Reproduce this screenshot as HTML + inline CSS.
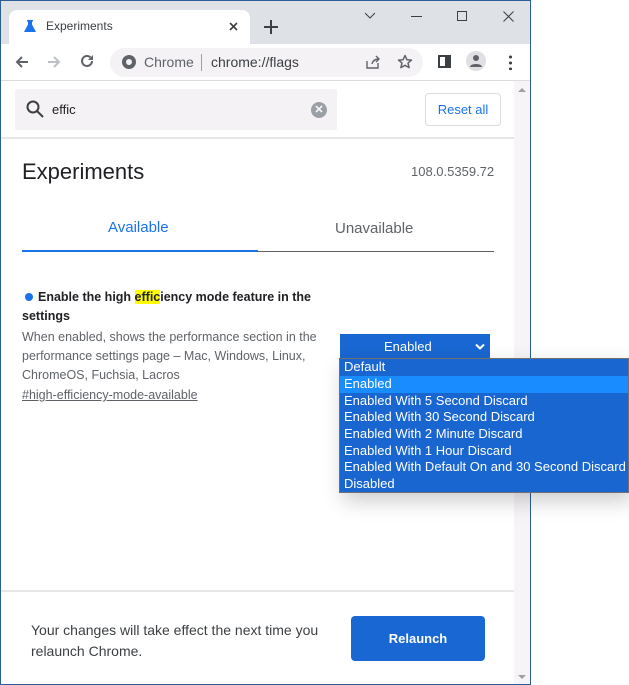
<!DOCTYPE html>
<html><head><meta charset="utf-8"><style>
*{margin:0;padding:0;box-sizing:border-box}
body{width:629px;height:685px;background:#fff;position:relative;overflow:hidden;font-family:"Liberation Sans",Arial,sans-serif}
.a{position:absolute}
.win{left:0;top:0;width:531px;height:685px;border:1px solid #2b5f93;background:#fff;overflow:hidden}
.opt{position:absolute;left:0;width:100%;height:16.7px;padding-left:4px;font-size:13px;color:#fff;line-height:16px;white-space:nowrap}
</style></head><body>
<div class="a win">
 <div class="a" style="left:0;top:0;width:530px;height:43px;background:#dee1e6"></div>
 <div class="a" style="left:8px;top:9px;width:241px;height:35px;background:#fff;border-radius:8px 8px 0 0"></div>
 <svg class="a" style="left:22px;top:18px" width="14" height="14" viewBox="0 0 14 14"><path d="M4 1h6v1.5H9v3l4 7.5H1l4-7.5v-3H4z" fill="#1a73e8"/></svg>
 <div class="a" style="left:45px;top:18px;font-size:12px;color:#3c4043">Experiments</div>
 <svg class="a" style="left:228px;top:21px" width="9" height="9"><path d="M1 1l7 7M8 1L1 8" stroke="#3c4043" stroke-width="1.6"/></svg>
 <svg class="a" style="left:263px;top:19px" width="14" height="14"><path d="M7 0v14M0 7h14" stroke="#3c4043" stroke-width="2"/></svg>
 <svg class="a" style="left:363px;top:11px" width="12" height="7"><path d="M1 1l5 5 5-5" stroke="#3c4043" fill="none"/></svg>
 <div class="a" style="left:410px;top:15px;width:11px;height:1px;background:#3c4043"></div>
 <div class="a" style="left:456px;top:10px;width:10px;height:10px;border:1px solid #3c4043"></div>
 <svg class="a" style="left:502px;top:10px" width="11" height="11"><path d="M0.5 0.5l10 10M10.5 0.5l-10 10" stroke="#3c4043"/></svg>
 <svg class="a" style="left:12px;top:52px" width="18" height="18"><path d="M15 9H4M9 4L4 9l5 5" stroke="#5f6368" stroke-width="2" fill="none"/></svg>
 <svg class="a" style="left:44px;top:52px" width="18" height="18"><path d="M3 9h11M9 4l5 5-5 5" stroke="#bdc1c6" stroke-width="2" fill="none"/></svg>
 <svg class="a" style="left:77px;top:51px" width="18" height="18"><path d="M14 9a5 5 0 1 1-1.5-3.6" stroke="#5f6368" stroke-width="2" fill="none"/><path d="M15 3v5h-5z" fill="#5f6368"/></svg>
 <div class="a" style="left:109px;top:47px;width:313px;height:29px;background:#f4f2f5;border-radius:15px"></div>
 <svg class="a" style="left:120px;top:53px" width="16" height="16"><circle cx="8" cy="8" r="7" fill="#5f6368"/><circle cx="8" cy="8" r="3" fill="#f4f2f5"/></svg>
 <div class="a" style="left:143px;top:53px;font-size:14px;color:#5f6368">Chrome</div>
 <div class="a" style="left:200px;top:53px;width:1px;height:17px;background:#9aa0a6"></div>
 <div class="a" style="left:210px;top:53px;font-size:14px;color:#3c4043">chrome://flags</div>
 <svg class="a" style="left:364px;top:53px" width="16" height="16"><path d="M2 7v7h11V9M7 10c1-4 4-5 7-5M11 2l3 3-3 3" stroke="#5f6368" stroke-width="1.4" fill="none"/></svg>
 <svg class="a" style="left:396px;top:53px" width="16" height="16"><path d="M8 1.5l1.9 4.2 4.6.4-3.5 3 1.1 4.5L8 11.3 3.9 13.6 5 9.1l-3.5-3 4.6-.4z" stroke="#5f6368" stroke-width="1.5" fill="none" stroke-linejoin="round"/></svg>
 <div class="a" style="left:437px;top:54px;width:13px;height:13px;border:2px solid #3c4043;border-right-width:6px"></div>
 <div class="a" style="left:465px;top:50px;width:20px;height:20px;border-radius:50%;background:#e0e0e4"></div>
 <svg class="a" style="left:467px;top:52px" width="16" height="16"><circle cx="8" cy="5" r="3" fill="#5f6368"/><path d="M2 14c0-4 12-4 12 0z" fill="#5f6368"/></svg>
 <div class="a" style="left:508px;top:53px;width:3px;height:16px;background:radial-gradient(circle,#3c4043 1.4px,transparent 1.6px) 0 0/3px 6px"></div>
 <div class="a" style="left:0;top:79px;width:530px;height:1px;background:#dadce0"></div>
 <div class="a" style="left:513px;top:80px;width:17px;height:604px;background:#f6f4f7"></div>
 <svg class="a" style="left:516px;top:86px" width="10" height="6"><path d="M1 5l4-4 4 4z" fill="#a0a0a0"/></svg>
 <svg class="a" style="left:516px;top:673px" width="10" height="6"><path d="M1 1l4 4 4-4z" fill="#a0a0a0"/></svg>
 <div class="a" style="left:14px;top:88px;width:322px;height:41px;background:#f4f2f5;border-radius:2px"></div>
 <svg class="a" style="left:24px;top:98px" width="20" height="20"><circle cx="8" cy="8" r="5.5" stroke="#3c4043" stroke-width="2" fill="none"/><path d="M12 12l6 6" stroke="#3c4043" stroke-width="2"/></svg>
 <div class="a" style="left:51px;top:101px;font-size:13px;color:#202124">effic</div>
 <div class="a" style="left:310px;top:101px;width:16px;height:16px;border-radius:50%;background:#9aa0a6;color:#fff;font-size:11px;text-align:center;line-height:16px;font-weight:bold">✕</div>
 <div class="a" style="left:424px;top:92px;width:76px;height:33px;border:1px solid #dadce0;border-radius:4px;color:#1a73e8;font-size:13px;text-align:center;line-height:31px">Reset all</div>
 <div class="a" style="left:0;top:136px;width:513px;height:2px;background:#e6e6e9"></div>
 <div class="a" style="left:21px;top:158px;font-size:22px;color:#202124">Experiments</div>
 <div class="a" style="left:410px;top:163px;font-size:13px;color:#5f6368">108.0.5359.72</div>
 <div class="a" style="left:107px;top:218px;font-size:15px;color:#1a73e8">Available</div>
 <div class="a" style="left:334px;top:219px;font-size:15px;color:#5f6368">Unavailable</div>
 <div class="a" style="left:21px;top:249px;width:236px;height:2px;background:#1a73e8"></div>
 <div class="a" style="left:257px;top:250px;width:236px;height:1px;background:#5f6368"></div>
 <div class="a" style="left:24px;top:292px;width:8px;height:8px;border-radius:50%;background:#1a73e8"></div>
 <div class="a" style="left:21px;top:287px;width:300px;font-size:12.5px;font-weight:bold;color:#202124;line-height:19px;text-indent:16px">Enable the high <span style="background:#ffff00">effic</span>iency mode feature in the settings</div>
 <div class="a" style="left:21px;top:327px;width:315px;font-size:12.5px;color:#5f6368;line-height:19px">When enabled, shows the performance section in the performance settings page – Mac, Windows, Linux, ChromeOS, Fuchsia, Lacros</div>
 <div class="a" style="left:21px;top:387px;font-size:12.5px;color:#5f6368;text-decoration:underline">#high-efficiency-mode-available</div>
 <div class="a" style="left:339px;top:333px;width:150px;height:25px;background:#1967d2;color:#fff;font-size:13px;line-height:25px;padding-left:44px">Enabled</div>
 <svg class="a" style="left:474px;top:342px" width="10" height="8"><path d="M1 1.5l4 4 4-4" stroke="#fff" stroke-width="2" fill="none"/></svg>
 <div class="a" style="left:0;top:589px;width:513px;height:2px;background:#e6e6e9"></div>
 <div class="a" style="left:30px;top:619px;width:320px;font-size:14px;color:#3c4043;line-height:21px">Your changes will take effect the next time you relaunch Chrome.</div>
 <div class="a" style="left:350px;top:615px;width:134px;height:45px;background:#1967d2;border-radius:4px;color:#fff;font-weight:bold;font-size:13px;text-align:center;line-height:45px">Relaunch</div>
</div>
<div class="a" style="left:339px;top:358px;width:290px;height:135px;background:#1a66d0;border:1px solid #707070;box-shadow:4px 8px 20px rgba(0,0,0,0.2)">
 <div class="opt" style="top:0">Default</div>
 <div class="opt" style="top:17px;background:#198cff">Enabled</div>
 <div class="opt" style="top:33.5px">Enabled With 5 Second Discard</div>
 <div class="opt" style="top:50.2px">Enabled With 30 Second Discard</div>
 <div class="opt" style="top:66.9px">Enabled With 2 Minute Discard</div>
 <div class="opt" style="top:83.6px">Enabled With 1 Hour Discard</div>
 <div class="opt" style="top:100.3px">Enabled With Default On and 30 Second Discard</div>
 <div class="opt" style="top:117px">Disabled</div>
</div>
</body></html>
